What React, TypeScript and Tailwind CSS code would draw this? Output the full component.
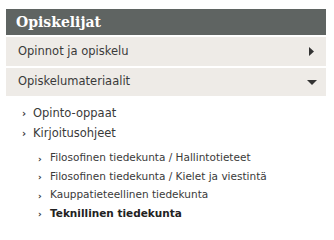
const topLinks = ["Opinto-oppaat", "Kirjoitusohjeet"];

const subLinks = [
  { label: "Filosofinen tiedekunta / Hallintotieteet", active: false },
  { label: "Filosofinen tiedekunta / Kielet ja viestintä", active: false },
  { label: "Kauppatieteellinen tiedekunta", active: false },
  { label: "Teknillinen tiedekunta", active: true },
];

const App = () => {
  return (
    <div className="min-h-screen bg-white pl-[6px] pt-[9px] font-['DejaVu_Sans',sans-serif]">
      <div className="w-[320px]">
        <div className="flex h-[26px] items-center bg-[#5f6462] pl-[10px] font-['DejaVu_Serif',serif] text-[14px] font-bold text-white">
          Opiskelijat
        </div>

        <div className="mt-[2px] flex h-[29px] items-center justify-between bg-[#eeebe7] pl-[12px] pr-[12px] text-[11.5px] text-[#3a3a3a]">
          <span>Opinnot ja opiskelu</span>
          <svg width="5" height="9" viewBox="0 0 5 9">
            <path d="M0 0 L5 4.5 L0 9 Z" fill="#333" />
          </svg>
        </div>

        <div className="mt-[2px] flex h-[28px] items-center justify-between bg-[#eeebe7] pl-[12px] pr-[9px] text-[11.5px] text-[#3a3a3a]">
          <span>Opiskelumateriaalit</span>
          <svg width="10" height="5" viewBox="0 0 10 5">
            <path d="M0 0 L10 0 L5 5 Z" fill="#333" />
          </svg>
        </div>

        <ul className="mt-[8px] text-[11.5px] text-[#3a3a3a]">
          {topLinks.map((l) => (
            <li key={l} className="flex h-[20px] items-center pl-[16px]">
              <span className="w-[11px] pb-[2px] text-[10px] font-bold">›</span>
              <span>{l}</span>
            </li>
          ))}
        </ul>

        <ul className="mt-[5px] text-[10.5px] text-[#3a3a3a]">
          {subLinks.map((s) => (
            <li key={s.label} className="flex h-[18.5px] items-center pl-[32px]">
              <span className="w-[12px] pt-[2px] text-[9px] font-bold">›</span>
              <span className={s.active ? "font-bold text-[#222]" : ""}>{s.label}</span>
            </li>
          ))}
        </ul>
      </div>
    </div>
  );
};

export default App;
